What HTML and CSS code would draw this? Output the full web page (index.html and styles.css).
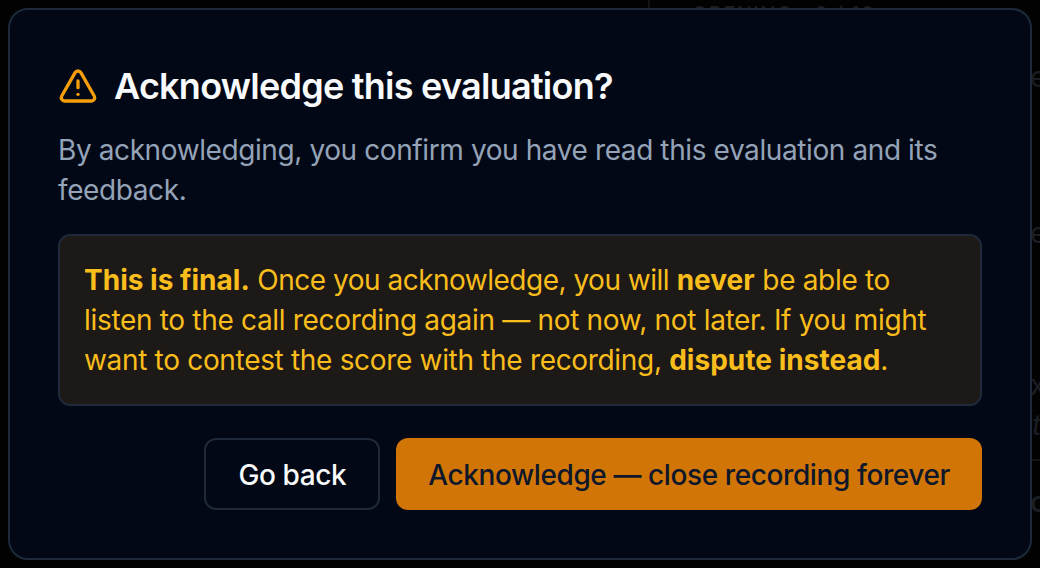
FILE: index.html
```html
<!DOCTYPE html>
<html lang="en">
<head>
  <meta charset="UTF-8">
  <meta name="viewport" content="width=device-width, initial-scale=1.0">
  <title>Acknowledge this evaluation?</title>
  <link rel="stylesheet" href="styles.css">
</head>
<body>
  <div class="backdrop-text backdrop-opening">OPENING · 6 / 10</div>
  <div class="backdrop-rule"></div>
  <div class="backdrop-text backdrop-e1">e</div>
  <div class="backdrop-text backdrop-e2">e</div>
  <div class="backdrop-text backdrop-x">x</div>
  <div class="backdrop-text backdrop-t">t</div>
  <div class="backdrop-text backdrop-o">o</div>
  <div class="backdrop-line"></div>

  <div class="dialog">
    <div class="dialog-title">
      <svg class="warn-icon" viewBox="0 0 24 24" fill="none" stroke="currentColor" stroke-width="2" stroke-linecap="round" stroke-linejoin="round">
        <path d="m21.73 18-8-14a2 2 0 0 0-3.48 0l-8 14A2 2 0 0 0 4 21h16a2 2 0 0 0 1.73-3"/>
        <path d="M12 9v4"/>
        <path d="M12 17h.01"/>
      </svg>
      <h2>Acknowledge this evaluation?</h2>
    </div>
    <p class="dialog-desc">By acknowledging, you confirm you have read this evaluation and its feedback.</p>
    <div class="notice">
      <strong>This is final.</strong> <span class="tight">Once you acknowledge, you will</span> <strong>never</strong> be able to listen to the call recording again — not now, not later. If you might want to contest the score with the recording, <strong>dispute instead</strong>.
    </div>
    <div class="dialog-actions">
      <button class="btn btn-ghost">Go back</button>
      <button class="btn btn-primary">Acknowledge — close recording forever</button>
    </div>
  </div>
</body>
</html>
```

FILE: styles.css
```css
html, body {
  margin: 0;
  height: 568px;
  overflow: hidden;
}

body {
  background-color: #020203;
  font-family: 'Inter', sans-serif;
  padding: 8px;
  box-sizing: border-box;
  position: relative;
}

.dialog {
  position: relative;
  width: 1024px;
  height: 552px;
  box-sizing: border-box;
  padding: 48px 48px;
  background-color: #020815;
  border: 2px solid #1e293b;
  border-radius: 20px;
}

.dialog-title {
  display: flex;
  align-items: center;
  gap: 16px;
  height: 56px;
}

.dialog-title h2 {
  margin: 0;
  font-size: 36px;
  font-weight: 600;
  letter-spacing: -0.75px;
  color: #f8fafc;
}

.warn-icon {
  width: 40px;
  height: 40px;
  color: #f59e0b;
  flex-shrink: 0;
}

.dialog-desc {
  margin: 16px 0 0;
  font-size: 28px;
  line-height: 40px;
  letter-spacing: -0.4px;
  color: #94a3b8;
}

.notice {
  margin-top: 24px;
  padding: 24px 24px;
  font-size: 28px;
  line-height: 40px;
  letter-spacing: -0.32px;
  color: #f9bd1c;
  background-color: #1c1917;
  border: 2px solid #1e293b;
  border-radius: 12px;
}

.notice strong {
  font-weight: 700;
  letter-spacing: 0.02px;
}

.notice .tight {
  letter-spacing: -0.5px;
}

.dialog-actions {
  display: flex;
  justify-content: flex-end;
  gap: 16px;
  margin-top: 32px;
}

.btn {
  height: 72px;
  padding: 1px 32px 0;
  box-sizing: border-box;
  font-family: inherit;
  font-size: 28px;
  font-weight: 500;
  letter-spacing: -0.4px;
  border-radius: 12px;
}

.btn-ghost {
  color: #f8fafc;
  background-color: #020815;
  border: 2px solid #1e293b;
}

.btn-primary {
  color: #0f172a;
  background-color: #d17606;
  border: none;
}

.backdrop-text {
  position: absolute;
  color: #1a1d22;
  font-size: 28px;
  line-height: 34px;
}

.backdrop-opening {
  left: 692px;
  top: 2px;
  letter-spacing: 1.5px;
  font-size: 20px;
  line-height: 24px;
  font-weight: 500;
}

.backdrop-rule {
  position: absolute;
  left: 648px;
  top: 0;
  width: 2px;
  height: 8px;
  background-color: #111316;
}

.backdrop-e1 { left: 1030px; top: 60px; }
.backdrop-e2 { left: 1030px; top: 216px; }
.backdrop-x { left: 1030px; top: 368px; }
.backdrop-t { left: 1032px; top: 408px; font-style: italic; }
.backdrop-o { left: 1030px; top: 485px; font-weight: 600; }

.backdrop-line {
  position: absolute;
  left: 1032px;
  top: 459px;
  width: 8px;
  height: 2px;
  background-color: #111316;
}
```
